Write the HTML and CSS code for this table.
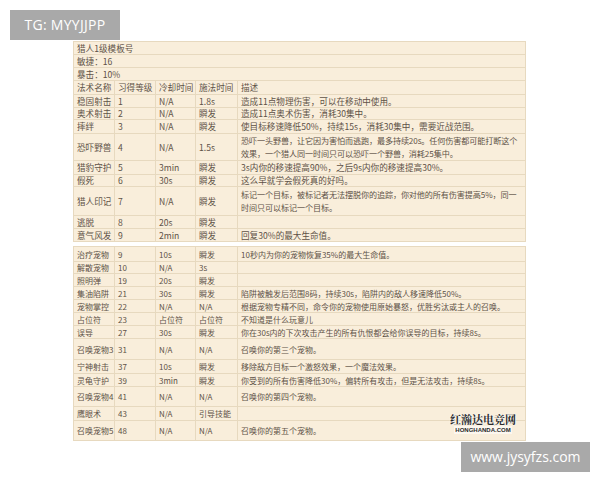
FILE: index.html
```html
<!DOCTYPE html>
<html lang="zh">
<head>
<meta charset="utf-8">
<title>猎人1级模板号</title>
<link rel="stylesheet" href="styles.css">
</head>
<body>
<div class="page">
  <div class="tag">TG: MYYJJPP</div>
  <div class="sheet">
    <table class="t top">
      <colgroup><col class="c1"><col class="c2"><col class="c3"><col class="c4"><col class="c5"></colgroup>
      <tr class="h13"><td colspan="5">猎人1级模板号</td></tr>
      <tr class="h13"><td colspan="5">敏捷：16</td></tr>
      <tr class="h13"><td colspan="5">暴击：10%</td></tr>
      <tr class="h14"><td>法术名称</td><td>习得等级</td><td>冷却时间</td><td>施法时间</td><td>描述</td></tr>
      <tr class="h13"><td>稳固射击</td><td>1</td><td>N/A</td><td>1.8s</td><td>造成11点物理伤害，可以在移动中使用。</td></tr>
      <tr class="h12"><td>奥术射击</td><td>2</td><td>N/A</td><td>瞬发</td><td>造成11点奥术伤害，消耗30集中。</td></tr>
      <tr class="h14"><td>摔绊</td><td>3</td><td>N/A</td><td>瞬发</td><td>使目标移速降低50%，持续15s，消耗30集中，需要近战范围。</td></tr>
      <tr class="h27"><td>恐吓野兽</td><td>4</td><td>N/A</td><td>1.5s</td><td class="two">恐吓一头野兽，让它因为害怕而逃跑，最多持续20s。任何伤害都可能打断这个<br>效果，一个猎人同一时间只可以恐吓一个野兽，消耗25集中。</td></tr>
      <tr class="h14"><td>猎豹守护</td><td>5</td><td>3min</td><td>瞬发</td><td>3s内你的移速提高90%，之后9s内你的移速提高30%。</td></tr>
      <tr class="h12"><td>假死</td><td>6</td><td>30s</td><td>瞬发</td><td>这么早就学会假死真的好吗。</td></tr>
      <tr class="h29"><td>猎人印记</td><td>7</td><td>N/A</td><td>瞬发</td><td class="two">标记一个目标，被标记者无法摆脱你的追踪，你对他的所有伤害提高5%，同一<br>时间只可以标记一个目标。</td></tr>
      <tr class="h13"><td>逃脱</td><td>8</td><td>20s</td><td>瞬发</td><td></td></tr>
      <tr class="h13"><td>意气风发</td><td>9</td><td>2min</td><td>瞬发</td><td>回复30%的最大生命值。</td></tr>
    </table>
    <table class="t bottom">
      <colgroup><col class="c1"><col class="c2"><col class="c3"><col class="c4"><col class="c5"></colgroup>
      <tr class="h15"><td>治疗宠物</td><td>9</td><td>10s</td><td>瞬发</td><td>10秒内为你的宠物恢复35%的最大生命值。</td></tr>
      <tr class="h12"><td>解散宠物</td><td>10</td><td>N/A</td><td>3s</td><td></td></tr>
      <tr class="h13"><td>照明弹</td><td>19</td><td>20s</td><td>瞬发</td><td></td></tr>
      <tr class="h13"><td>集油陷阱</td><td>21</td><td>30s</td><td>瞬发</td><td>陷阱被触发后范围8码，持续30s，陷阱内的敌人移速降低50%。</td></tr>
      <tr class="h13"><td>宠物掌控</td><td>22</td><td>N/A</td><td>N/A</td><td>根据宠物专精不同，命令你的宠物使用原始暴怒，优胜劣汰或主人的召唤。</td></tr>
      <tr class="h13"><td>占位符</td><td>23</td><td>占位符</td><td>占位符</td><td>不知道是什么玩意儿</td></tr>
      <tr class="h13"><td>误导</td><td>27</td><td>30s</td><td>瞬发</td><td>你在30s内的下次攻击产生的所有仇恨都会给你误导的目标，持续8s。</td></tr>
      <tr class="h21"><td>召唤宠物3</td><td>31</td><td>N/A</td><td>N/A</td><td>召唤你的第三个宠物。</td></tr>
      <tr class="h14"><td>宁神射击</td><td>37</td><td>10s</td><td>瞬发</td><td>移除敌方目标一个激怒效果，一个魔法效果。</td></tr>
      <tr class="h13"><td>灵龟守护</td><td>39</td><td>3min</td><td>瞬发</td><td>你受到的所有伤害降低30%，偏转所有攻击，但是无法攻击，持续8s。</td></tr>
      <tr class="h20"><td>召唤宠物4</td><td>41</td><td>N/A</td><td>N/A</td><td>召唤你的第四个宠物。</td></tr>
      <tr class="h14"><td>鹰眼术</td><td>43</td><td>N/A</td><td>引导技能</td><td></td></tr>
      <tr class="h20"><td>召唤宠物5</td><td>48</td><td>N/A</td><td>N/A</td><td>召唤你的第五个宠物。</td></tr>
    </table>
    <div class="mark">
      <span class="mark-cn">红瀚达电竞网</span>
      <span class="mark-en">HONGHANDA.COM</span>
    </div>
  </div>
  <div class="site">www.jysyfzs.com</div>
</div>
</body>
</html>
```

FILE: styles.css
```css
html, body {
  margin: 0;
  padding: 0;
  background: #ffffff;
}

.page {
  width: 600px;
  height: 480px;
  box-sizing: border-box;
  padding: 10px 10px 0 10px;
  display: flex;
  flex-direction: column;
  overflow: hidden;
}

.tag {
  width: 110px;
  height: 30px;
  background: #a9a9a9;
  color: #ffffff;
  font-family: "Open Sans", "Liberation Sans", sans-serif;
  font-size: 14px;
  line-height: 30px;
  text-align: center;
  letter-spacing: 0.3px;
}

.sheet {
  position: relative;
  margin: 1px 0 0 63px;
  width: 452px;
}

.t {
  width: 452px;
  border-collapse: collapse;
  table-layout: fixed;
  background: #f9eedb;
  color: #5e5247;
  font-family: "Noto Sans CJK SC", "Noto Sans", sans-serif;
}

.top {
  font-size: 8.6px;
}

.bottom {
  margin-top: 4px;
  font-size: 8px;
}

.c1 { width: 41px; }
.c2 { width: 41px; }
.c3 { width: 40px; }
.c4 { width: 42px; }
.c5 { width: 288px; }

.t td {
  border: 1px solid #e7d9bf;
  padding: 0 1px 0 3px;
  line-height: 11px;
  white-space: nowrap;
  overflow: hidden;
  vertical-align: middle;
}

.t td.two {
  line-height: 13px;
  font-size: 8.1px;
  letter-spacing: -0.1px;
}

.h12 { height: 12px; }
.h13 { height: 13px; }
.h14 { height: 14px; }
.h15 { height: 15px; }
.h20 { height: 20px; }
.h21 { height: 21px; }
.h27 { height: 27px; }
.h29 { height: 29px; }

.mark {
  position: absolute;
  left: 377px;
  top: 372px;
  display: flex;
  flex-direction: column;
  align-items: center;
  width: 66px;
}

.mark-cn {
  font-family: "Noto Serif CJK SC", "Noto Sans CJK SC", serif;
  font-weight: 700;
  font-size: 11px;
  line-height: 13px;
  color: #2a2a2a;
  text-shadow: 0 0 2px #ffffff, 0 0 1px #ffffff;
}

.mark-en {
  font-family: "Liberation Sans", sans-serif;
  font-weight: 700;
  font-size: 6px;
  line-height: 8px;
  color: #2a2a2a;
  background: rgba(255, 255, 255, 0.55);
  padding: 0 1px;
}

.site {
  align-self: flex-end;
  width: 129px;
  height: 30px;
  margin-top: 1px;
  background: #a9a9a9;
  color: #ffffff;
  font-family: "Open Sans", "Liberation Sans", sans-serif;
  font-size: 14px;
  line-height: 30px;
  text-align: center;
}
```
